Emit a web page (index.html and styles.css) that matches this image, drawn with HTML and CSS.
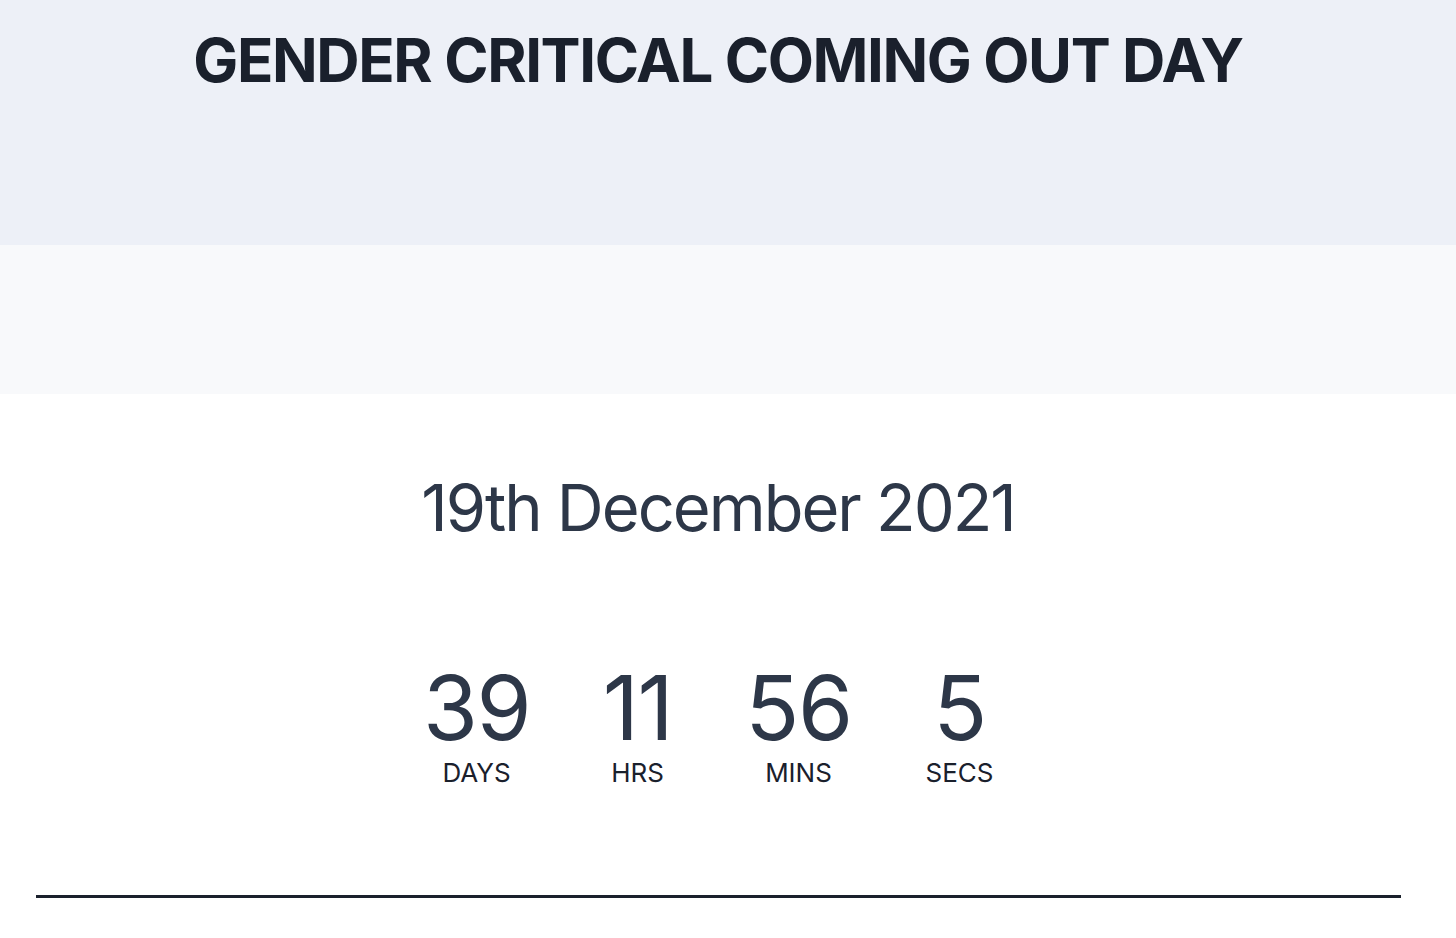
FILE: index.html
```html
<!DOCTYPE html>
<html lang="en">
<head>
<meta charset="utf-8">
<title>Gender Critical Coming Out Day</title>
<link rel="stylesheet" href="styles.css">
</head>
<body>
<header class="hero">
  <h1 class="title">GENDER CRITICAL COMING OUT DAY</h1>
</header>
<section class="band"></section>
<main class="main">
  <p class="date">19th December 2021</p>
  <div class="countdown">
    <div class="unit"><span class="num">39</span><span class="label">DAYS</span></div>
    <div class="unit"><span class="num">11</span><span class="label">HRS</span></div>
    <div class="unit"><span class="num">56</span><span class="label">MINS</span></div>
    <div class="unit"><span class="num">5</span><span class="label">SECS</span></div>
  </div>
  <hr class="rule">
</main>
</body>
</html>
```

FILE: styles.css
```css
html, body {
  margin: 0;
  padding: 0;
  background: #ffffff;
  font-family: Inter, "Liberation Sans", Arial, sans-serif;
  overflow: hidden;
}
.hero {
  height: 245px;
  background: #edf0f7;
  box-sizing: border-box;
  padding: 24px 20px 0 0;
}
.title {
  margin: 0;
  text-align: center;
  font-size: 60px;
  line-height: 1.2;
  font-weight: 700;
  color: #1a202c;
  letter-spacing: -1.4px;
}
.band {
  height: 149px;
  background: #f8f9fb;
}
.main {
  padding: 75px 0 0 0;
  display: flex;
  flex-direction: column;
  align-items: center;
}
.date {
  margin: 0;
  padding-right: 20px;
  font-size: 65px;
  line-height: 1.2;
  font-weight: 400;
  color: #2d3748;
  letter-spacing: -2px;
}
.countdown {
  margin-top: 116px;
  padding-right: 20px;
  display: grid;
  grid-template-columns: repeat(4, 161px);
}
.unit {
  display: flex;
  flex-direction: column;
  align-items: center;
  color: #2d3748;
}
.num {
  font-size: 89px;
  line-height: 1;
  font-weight: 400;
  letter-spacing: -1.5px;
}
.label {
  font-size: 26px;
  line-height: 1.2;
  margin-top: 5px;
  color: #1a202c;
}
.rule {
  align-self: stretch;
  margin: 107px 55px 0 36px;
  border: 0;
  height: 3px;
  background: #1a202c;
}
```
